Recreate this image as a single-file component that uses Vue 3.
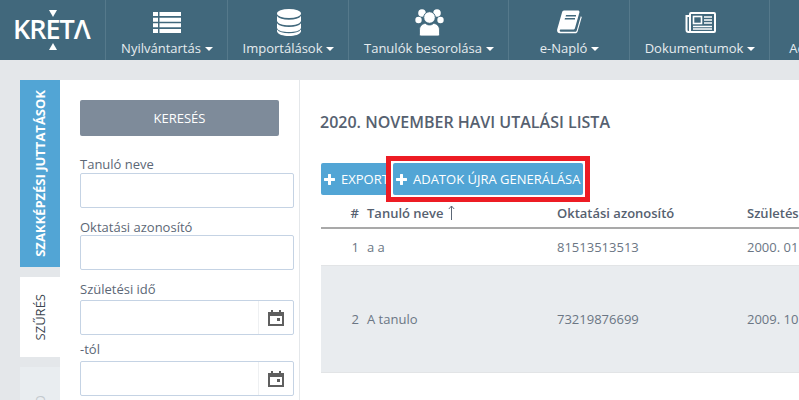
<script setup>
const navItems = [
  { label: 'Nyilvántartás', icon: 'list', width: 122 },
  { label: 'Importálások', icon: 'db', width: 121 },
  { label: 'Tanulók besorolása', icon: 'users', width: 160 },
  { label: 'e-Napló', icon: 'book', width: 121 },
  { label: 'Dokumentumok', icon: 'news', width: 140 },
  { label: 'Adminisztráció', icon: 'none', width: 140 },
]
const rows = [
  { n: 1, name: 'a a', id: '81513513513', born: '2000. 01. 01.', cls: 'short' },
  { n: 2, name: 'A tanulo', id: '73219876699', born: '2009. 10. 10.', cls: 'tall' },
]
</script>

<template>
  <div class="page">
    <header class="nav">
      <div class="logo">
        <svg class="tri-top" width="10" height="8" viewBox="0 0 10 8"><path d="M1 0h8L5 7z" fill="#fff" /></svg>
        <span class="logo-text">KRETΛ</span>
        <svg class="tri-bottom" width="10" height="8" viewBox="0 0 10 8"><path d="M1 7h8L5 0z" fill="#fff" /></svg>
      </div>
      <a v-for="item in navItems" :key="item.label" class="nav-item" :style="{ width: item.width + 'px' }">
        <span class="nav-icon">
          <svg v-if="item.icon === 'list'" width="28" height="21" viewBox="0 0 28 21" fill="#fff">
            <path d="M0 0h5v4H0zM6.500 0H28v4H6.500zM0 5.700h5v4H0zM6.500 5.700H28v4H6.500zM0 11.300h5v4H0zM6.500 11.300H28v4H6.500zM0 17h5v4H0zM6.500 17H28v4H6.500z" />
          </svg>
          <svg v-else-if="item.icon === 'db'" width="24" height="27" viewBox="0 0 24 27" fill="#fff">
            <ellipse cx="12" cy="4.500" rx="12" ry="4.500" />
            <path d="M0 7c2 2.500 6 3.700 12 3.700S22 9.500 24 7v5c-1 3-6 4.200-12 4.200S1 15 0 12zM0 14.200c2 2.500 6 3.700 12 3.700s10-1.200 12-3.700V19c-1 3-6 4-12 4S1 22 0 19zM0 20.500c2 2.500 6 3.700 12 3.700s10-1.200 12-3.700v2c-1 3-6 4.500-12 4.500S1 25.500 0 22.500z" />
          </svg>
          <svg v-else-if="item.icon === 'users'" width="29" height="27" viewBox="0 0 29 27" fill="#fff">
            <circle cx="7" cy="4" r="3.800" />
            <circle cx="22" cy="4" r="3.800" />
            <circle cx="3.500" cy="11" r="3.200" />
            <circle cx="25.500" cy="11" r="3.200" />
            <circle cx="14.500" cy="8.500" r="5.800" stroke="#41687c" stroke-width="1" />
            <path d="M6 27c-.8 0-1.500-.7-1.500-1.500V21c0-4 3-6.500 6-6.500 1.500 1.200 2.500 1.500 4 1.500s2.500-.3 4-1.500c3 0 6 2.500 6 6.500v4.500c0 .8-.7 1.500-1.500 1.500z" stroke="#41687c" stroke-width=".8" />
          </svg>
          <svg v-else-if="item.icon === 'book'" width="25" height="24" viewBox="0 0 25 24" fill="#fff">
            <path d="M7 .5h14c1.200 0 1.700 1 1.400 2L18 18c-.3 1-1 1.500-2 1.500H4c-1.500 0-1.800 1.800-.5 2.200h14.500c1 0 1.500-.5 1.800-1.500l4-14 1 .8-4.200 14.500c-.3 1-1.200 1.800-2.400 1.800H3.500C1 23.800-.500 21.500.3 19L5 2.500C5.300 1.300 6 .5 7 .5z" />
            <path d="M9 5h10v1.500H8.600zM8 8h10v1.500H7.600z" fill="#41687c" />
          </svg>
          <svg v-else-if="item.icon === 'news'" width="31" height="21" viewBox="0 0 31 21" fill="none" stroke="#fff">
            <rect x="5" y="1" width="25" height="19" rx="1" stroke-width="2" />
            <path d="M5 4H1.500v14c0 1.200 1 2 2 2h2" stroke-width="2" />
            <rect x="8.500" y="4.500" width="8" height="7" stroke-width="1.600" />
            <path d="M19 5h8M19 8h8M19 11h8M8 14.500h19M8 17h19" stroke-width="1.600" />
          </svg>
        </span>
        <span class="nav-label">{{ item.label }}<i class="caret"></i></span>
      </a>
    </header>

    <div class="body">
      <div class="tabs">
        <div class="tab tab-active"><span>SZAKKÉPZÉSI JUTTATÁSOK</span></div>
        <div class="tab tab-white"><span>SZŰRÉS</span></div>
        <div class="tab tab-gray"><span>O</span></div>
      </div>

      <aside class="panel">
        <button class="search">KERESÉS</button>
        <label class="lbl l1">Tanuló neve</label>
        <div class="input"></div>
        <label class="lbl l2">Oktatási azonosító</label>
        <div class="input"></div>
        <label class="lbl l3">Születési idő</label>
        <div class="input date">
          <span class="cal">
            <svg width="16" height="16" viewBox="0 0 16 16" fill="#5f5f5f"><path d="M3 0h2v2h6V0h2v2h3v14H0V2h3zM2 6v8h12V6zM9 8h3v3H9z" /></svg>
          </span>
        </div>
        <label class="lbl l4">-tól</label>
        <div class="input date">
          <span class="cal">
            <svg width="16" height="16" viewBox="0 0 16 16" fill="#5f5f5f"><path d="M3 0h2v2h6V0h2v2h3v14H0V2h3zM2 6v8h12V6zM9 8h3v3H9z" /></svg>
          </span>
        </div>
      </aside>

      <main class="main">
        <h1 class="title">2020. NOVEMBER HAVI UTALÁSI LISTA</h1>
        <div class="actions">
          <button class="btn export">
            <svg class="plus" width="11" height="11" viewBox="0 0 11 11" fill="#fff"><path d="M4 .5c0-.3.2-.5.500-.5h2c.3 0 .5.200.5.500V4h3.500c.3 0 .5.200.5.500v2c0 .3-.2.500-.5.500H7v3.500c0 .3-.2.500-.5.500h-2c-.3 0-.5-.2-.5-.5V7H.5C.2 7 0 6.800 0 6.500v-2C0 4.200.2 4 .5 4H4z" /></svg>
            EXPORT
          </button>
          <button class="btn regen">
            <svg class="plus" width="11" height="11" viewBox="0 0 11 11" fill="#fff"><path d="M4 .5c0-.3.2-.5.500-.5h2c.3 0 .5.200.5.500V4h3.500c.3 0 .5.200.5.500v2c0 .3-.2.500-.5.500H7v3.500c0 .3-.2.500-.5.500h-2c-.3 0-.5-.2-.5-.5V7H.5C.2 7 0 6.800 0 6.500v-2C0 4.200.2 4 .5 4H4z" /></svg>
            ADATOK ÚJRA GENERÁLÁSA
          </button>
        </div>
        <div class="table">
          <div class="row head">
            <span class="c-n">#</span>
            <span class="c-name">Tanuló neve
              <svg class="arrow" width="7" height="15" viewBox="0 0 7 15" fill="none" stroke="#5c6776" stroke-width="1"><path d="M3.500 15V1M.8 4 3.500 1l2.700 3" /></svg>
            </span>
            <span class="c-id">Oktatási azonosító</span>
            <span class="c-born">Születési idő</span>
          </div>
          <div v-for="r in rows" :key="r.n" class="row" :class="r.cls">
            <span class="c-n">{{ r.n }}</span>
            <span class="c-name">{{ r.name }}</span>
            <span class="c-id">{{ r.id }}</span>
            <span class="c-born">{{ r.born }}</span>
          </div>
        </div>
      </main>
    </div>
  </div>
</template>

<style>
html, body { margin: 0; background: #e4e7ea; }
</style>

<style scoped>
.page {
  width: 799px; height: 400px; overflow: hidden;
  font-family: "Open Sans", "Liberation Sans", sans-serif;
  background: #e4e7ea;
}
.nav { display: flex; height: 60px; background: #41687c; overflow: hidden; }
.logo {
  width: 106px; flex: none; height: 60px; box-sizing: border-box; border-right: 1px solid #55798b;
  display: flex; flex-direction: column; align-items: flex-start; padding: 10px 0 0 48px; position: relative;
}
.tri-top, .tri-bottom { display: block; }
.logo-text {
  position: absolute; left: 13px; top: 13px;
  color: #fff; font-size: 27px; font-weight: 600; line-height: 32px; letter-spacing: -1px;
}
.tri-bottom { margin-top: 25px; }
.nav-item {
  flex: none; box-sizing: border-box; height: 60px; border-right: 1px solid #55798b; padding-left: 1px;
  display: flex; flex-direction: column; align-items: center; color: #e6ecef;
}
.nav-icon { height: 38px; display: flex; align-items: center; padding-top: 6px; box-sizing: border-box; }
.nav-label { font-size: 13px; line-height: 20px; white-space: nowrap; }
.caret {
  display: inline-block; width: 0; height: 0; margin-left: 4px; vertical-align: 2px;
  border-left: 4px solid transparent; border-right: 4px solid transparent; border-top: 4px solid #fff;
}

.body { display: flex; padding: 20px 0 0 20px; height: 340px; box-sizing: border-box; }
.tabs { width: 40px; flex: none; display: flex; flex-direction: column; gap: 10px; }
.tab { display: flex; align-items: center; justify-content: center; box-sizing: border-box; flex: none; }
.tab span { writing-mode: vertical-rl; transform: rotate(180deg); font-size: 13px; white-space: nowrap; }
.tab-active { height: 187px; background: #52a5d5; color: #fff; font-weight: 700; }
.tab-white { height: 80px; background: #fff; color: #3c4650; }
.tab-gray { height: 60px; background: #e9edf0; color: #c4c9ce; align-items: flex-start; padding-top: 28px; }

.panel {
  width: 240px; flex: none; background: #fff; box-sizing: border-box;
  border-right: 1px solid #e4e7ea; padding: 20px 5px 0 20px;
  display: flex; flex-direction: column; align-items: flex-start;
}
.search {
  width: 199px; height: 36px; border: 0; border-radius: 2px; background: #7e8b9a; color: #fff;
  font: 400 13px "Open Sans", sans-serif; padding: 0; flex: none;
}
.lbl { font-size: 13px; line-height: 18px; color: #5c6776; display: block; }
.l1 { margin-top: 19px; height: 18px; }
.l2 { margin-top: 10px; height: 17px; }
.l3 { margin-top: 10px; height: 20px; }
.l4 { margin-top: 5px; height: 21px; }
.input {
  width: 214px; height: 35px; flex: none; box-sizing: border-box; background: #fff;
  border: 1px solid #c5d3e4; border-radius: 2px; display: flex; justify-content: flex-end;
}
.cal {
  width: 35px; box-sizing: border-box; border-left: 1px solid #eef0f2;
  display: flex; align-items: center; justify-content: center;
}

.main { flex: 1; min-width: 0; background: #fff; padding: 0 0 0 21px; overflow: hidden; }
.title {
  margin: 32px 0 0 -1px; font-size: 16px; line-height: 20px; font-weight: 600; color: #566170; white-space: nowrap;
}
.actions { display: flex; margin-top: 31px; }
.btn {
  height: 32px; border: 0; border-radius: 2px; background: #52a5d5; color: #fff; padding: 0;
  font: 400 13px "Open Sans", sans-serif; display: flex; align-items: center; white-space: nowrap;
}
.plus { flex: none; margin: 0 6px 0 3px; }
.export { width: 72px; flex: none; }
.regen { width: 190px; flex: none; position: relative; }
.regen::after {
  content: ""; position: absolute; inset: -7px; border: 5px solid #ed1c24;
  box-shadow: inset 0 0 0 2px #fff; pointer-events: none;
}

.table { margin-top: 4px; width: 600px; }
.row { display: flex; font-size: 13px; color: #6b7684; box-sizing: border-box; align-items: center; }
.head { height: 30px; border-bottom: 2px solid #a9a9a9; color: #566170; font-weight: 600; }
.short { height: 37px; border-bottom: 1px solid #e2e4e6; }
.tall { height: 107px; background: #e9ecef; border-bottom: 1px solid #e2e4e6; }
.c-n { width: 38px; text-align: right; flex: none; }
.c-name { width: 190px; margin-left: 8px; flex: none; white-space: nowrap; }
.c-id { width: 190px; flex: none; white-space: nowrap; }
.c-born { flex: none; white-space: nowrap; }
.arrow { vertical-align: -2px; margin-left: 1px; }
</style>
